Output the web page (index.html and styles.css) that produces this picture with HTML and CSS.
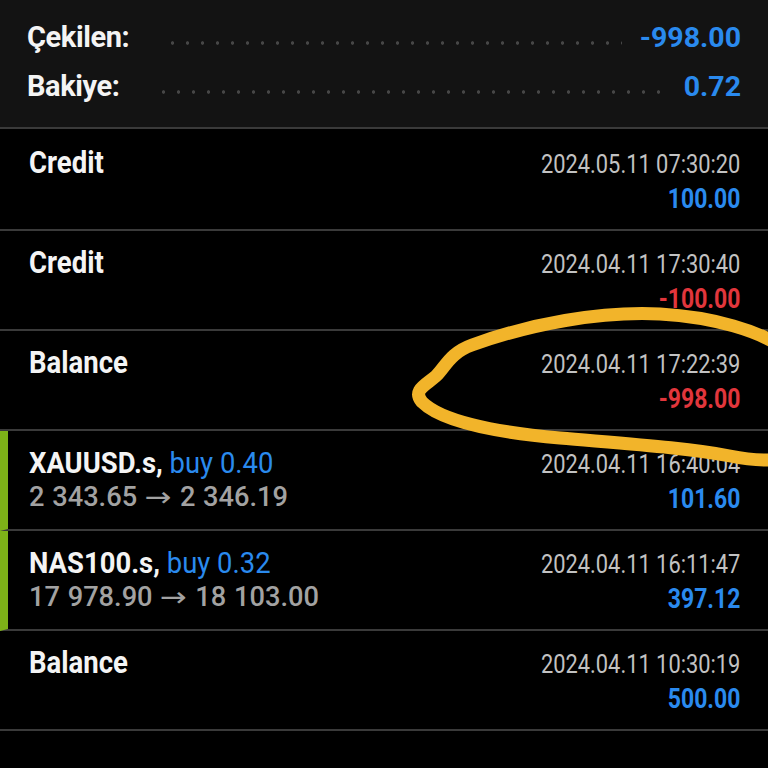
FILE: index.html
```html
<!DOCTYPE html>
<html lang="tr">
<head>
    <meta charset="UTF-8">
    <meta name="viewport" content="width=device-width, initial-scale=1.0">
    <title>Geçmiş</title>
    <link rel="stylesheet" href="styles.css">
</head>
<body>
    <div class="screen">
        <div class="summary">
            <div class="sumRow">
                <span class="sumLabel">Çekilen:</span>
                <span class="leader lead1"></span>
                <span class="sumValue">-998.00</span>
            </div>
            <div class="sumRow">
                <span class="sumLabel">Bakiye:</span>
                <span class="leader lead2"></span>
                <span class="sumValue">0.72</span>
            </div>
        </div>

        <div class="deals">
            <div class="deal">
                <div class="dealLeft">
                    <div class="title">Credit</div>
                </div>
                <div class="dealRight">
                    <div class="time">2024.05.11 07:30:20</div>
                    <div class="amount plus">100.00</div>
                </div>
            </div>
            <div class="deal">
                <div class="dealLeft">
                    <div class="title">Credit</div>
                </div>
                <div class="dealRight">
                    <div class="time">2024.04.11 17:30:40</div>
                    <div class="amount minus">-100.00</div>
                </div>
            </div>
            <div class="deal">
                <div class="dealLeft">
                    <div class="title">Balance</div>
                </div>
                <div class="dealRight">
                    <div class="time">2024.04.11 17:22:39</div>
                    <div class="amount minus">-998.00</div>
                </div>
            </div>
            <div class="deal trade">
                <div class="dealLeft">
                    <div class="title">XAUUSD.s, <span class="side">buy 0.40</span></div>
                    <div class="prices">2 343.65 <span class="arrow">&rarr;</span> 2 346.19</div>
                </div>
                <div class="dealRight">
                    <div class="time">2024.04.11 16:40:04</div>
                    <div class="amount plus">101.60</div>
                </div>
            </div>
            <div class="deal trade">
                <div class="dealLeft">
                    <div class="title">NAS100.s, <span class="side">buy 0.32</span></div>
                    <div class="prices">17 978.90 <span class="arrow">&rarr;</span> 18 103.00</div>
                </div>
                <div class="dealRight">
                    <div class="time">2024.04.11 16:11:47</div>
                    <div class="amount plus">397.12</div>
                </div>
            </div>
            <div class="deal">
                <div class="dealLeft">
                    <div class="title">Balance</div>
                </div>
                <div class="dealRight">
                    <div class="time">2024.04.11 10:30:19</div>
                    <div class="amount plus">500.00</div>
                </div>
            </div>
        </div>

        <!-- el ile çizilmiş işaret -->
        <svg class="mark" viewBox="0 0 768 768" width="768" height="768">
            <path d="M790 352 C760 330 712 317 660 314 C600 311 530 324 472 345 C450 353 446 366 436 376 C426 385 412 390 422 402 C440 420 490 432 560 438 C630 444 690 448 730 456 C750 460 770 462 790 458"
                  fill="none" stroke="#f2b42a" stroke-width="13" stroke-linecap="round" stroke-linejoin="round"/>
        </svg>
    </div>
</body>
</html>
```

FILE: styles.css
```css
*{box-sizing: border-box;}
html, body{
    margin: 0;
    padding: 0;
    background: #000;
}
.screen{
    position: relative;
    width: 768px;
    height: 768px;
    overflow: hidden;
    font-family: Roboto, "Liberation Sans", sans-serif;
    color: #f4f4f4;
}

/* ozet */
.summary{
    height: 129px;
    padding: 13px 27px 0 27px;
    background: #131313;
    border-bottom: 2px solid #3a3a3a;
}
.sumRow{
    display: flex;
    height: 49px;
    line-height: 49px;
}
.sumLabel{
    font-size: 29px;
    font-weight: 700;
    letter-spacing: -0.4px;
}
.leader{
    flex: 1;
    margin: 0 18px 0 36px;
    background-image: radial-gradient(circle, #464646 1.4px, transparent 2px);
    background-size: 15px 6px;
    background-repeat: repeat-x;
    background-position: 0 27px;
}
.sumValue{
    font-size: 28.5px;
    font-weight: 700;
    color: #2a8aee;
}

/* islemler */
.deal{
    display: flex;
    justify-content: space-between;
    height: 100px;
    padding: 14px 28px 0 29px;
    border-bottom: 2px solid #3a3a3a;
}
.deal:first-child{
    height: 102px;
    padding-top: 16px;
}
.trade{
    border-left: 8px solid #7db218;
    padding-left: 21px;
}
.trade .dealLeft{
    padding-top: 1px;
}
.title, .prices{
    transform: scaleX(.86);
    transform-origin: left center;
    white-space: nowrap;
}
.title{
    font-size: 32px;
    font-weight: 700;
    line-height: 34px;
}
.trade .title{
    font-size: 29.5px;
    transform: scaleX(.93);
}
.side{
    font-weight: 400;
    color: #2a8aee;
}
.prices{
    font-size: 28.5px;
    font-weight: 500;
    line-height: 34px;
    color: #a2a2a2;
    transform: scaleX(.955);
    word-spacing: 1px;
}
.arrow{
    display: inline-block;
    font-family: "DejaVu Sans", sans-serif;
    font-size: 27px;
    font-weight: 400;
    line-height: 30px;
    margin: 0 3px;
    transform: scaleX(1.25);
}
.dealRight{
    padding-top: 2px;
    text-align: right;
}
.time, .amount{
    transform-origin: right center;
    white-space: nowrap;
}
.time{
    font-size: 26px;
    line-height: 34px;
    color: #c2c2c2;
    transform: scaleX(.84);
}
.amount{
    font-size: 28px;
    font-weight: 700;
    line-height: 36px;
    transform: scaleX(.82);
}
.plus{color: #2a8aee;}
.minus{color: #e2363c;}

.mark{
    position: absolute;
    left: 0;
    top: 0;
    pointer-events: none;
}
```
